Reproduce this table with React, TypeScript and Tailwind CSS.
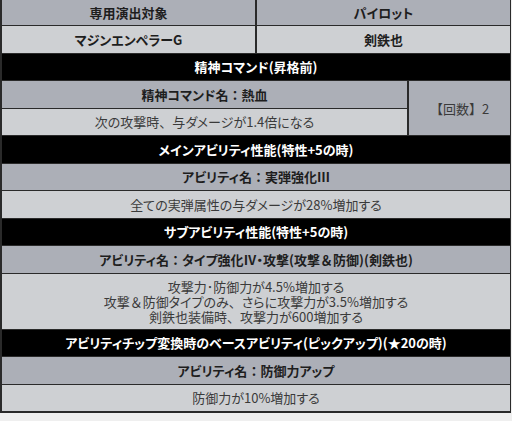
import React from "react";

function N({ children }: { children: React.ReactNode }) {
  return <span className="[font-feature-settings:normal]">{children}</span>;
}

function Black({ children }: { children: React.ReactNode }) {
  return (
    <div className="h-[27.5px] bg-black border-b border-[#2a2a2a] flex items-center justify-center text-white font-bold text-[13px]">
      {children}
    </div>
  );
}
function Gray({ children }: { children: React.ReactNode }) {
  return (
    <div className="h-[27.5px] bg-[#acafb7] border-b border-[#2a2a2a] flex items-center justify-center text-[#1e1e1e] font-bold text-[13px]">
      {children}
    </div>
  );
}
function Light({ children }: { children: React.ReactNode }) {
  return (
    <div className="h-[27.5px] bg-[#ced0d3] border-b border-[#2a2a2a] flex items-center justify-center text-[#3a3a3a] text-[13px]">
      {children}
    </div>
  );
}

export default function App() {
  return (
    <div className="w-[512px] h-[421px] bg-[#efefef] font-['Noto_Sans_CJK_JP','Noto_Sans',sans-serif] [font-feature-settings:'palt']">
      <div className="w-[511px] border-l-2 border-r border-[#2a2a2a] flex flex-col leading-none">
        <div className="flex h-[26px] border-b border-[#2a2a2a] bg-[#acafb7] text-[#1e1e1e] font-bold text-[13px]">
          <div className="w-[255px] flex items-center justify-center border-r-2 border-[#2a2a2a]">専用演出対象</div>
          <div className="flex-1 flex items-center justify-center">パイロット</div>
        </div>
        <div className="flex h-[27.5px] border-b border-[#2a2a2a] bg-[#ced0d3] text-[#1e1e1e] font-bold text-[13px]">
          <div className="w-[255px] flex items-center justify-center border-r-2 border-[#2a2a2a]">マジンエンペラーG</div>
          <div className="flex-1 flex items-center justify-center">剣鉄也</div>
        </div>
        <Black>精神コマンド(昇格前)</Black>
        <div className="flex">
          <div className="w-[407px] flex flex-col border-r-2 border-[#2a2a2a]">
            <Gray>精神コマンド名<N>：</N>熱血</Gray>
            <Light>次の攻撃時<N>、</N>与ダメージが1.4倍になる</Light>
          </div>
          <div className="flex-1 bg-[#acafb7] border-b border-[#2a2a2a] flex items-center justify-center text-[#3a3a3a] text-[13px]">
            <N>【回数】</N>2
          </div>
        </div>
        <Black>メインアビリティ性能(特性+5の時)</Black>
        <Gray>アビリティ名<N>：</N>実弾強化Ⅲ</Gray>
        <Light>全ての実弾属性の与ダメージが28%増加する</Light>
        <Black>サブアビリティ性能(特性+5の時)</Black>
        <Gray>アビリティ名<N>：</N>タイプ強化Ⅳ・攻撃(攻撃<N>＆</N>防御)(剣鉄也)</Gray>
        <div className="h-[56px] bg-[#ced0d3] border-b border-[#2a2a2a] flex flex-col items-center justify-center text-[#3a3a3a] text-[13px] leading-[15px]">
          <div>攻撃力･防御力が4.5%増加する</div>
          <div>攻撃<N>＆</N>防御タイプのみ<N>、</N>さらに攻撃力が3.5%増加する</div>
          <div>剣鉄也装備時<N>、</N>攻撃力が600増加する</div>
        </div>
        <Black>アビリティチップ変換時のベースアビリティ(ピックアップ)(★20の時)</Black>
        <Gray>アビリティ名<N>：</N>防御力アップ</Gray>
        <div className="h-[28px] bg-[#ced0d3] border-b-2 border-[#2a2a2a] flex items-center justify-center text-[#3a3a3a] text-[13px]">
          防御力が10%増加する
        </div>
      </div>
    </div>
  );
}
